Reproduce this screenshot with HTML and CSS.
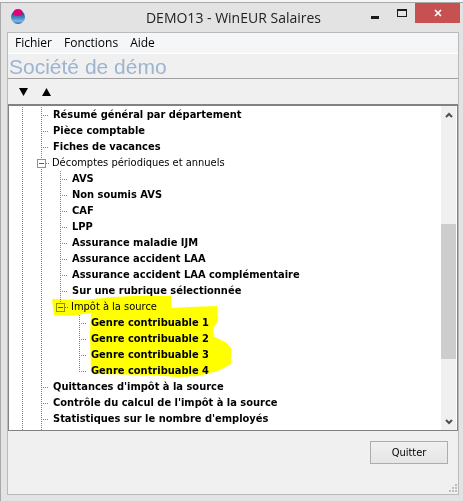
FILE: index.html
```html
<!DOCTYPE html>
<html lang="fr">
<head>
  <meta charset="UTF-8">
  <meta name="viewport" content="width=device-width, initial-scale=1.0">
  <title>DEMO13 - WinEUR Salaires</title>
  <link rel="stylesheet" href="styles.css">
</head>
<body>
  <div class="window">
    <header class="titlebar">
      <svg class="app-icon" width="16" height="16" viewBox="0 0 16 16">
        <defs>
          <linearGradient id="globe" x1="0" y1="0" x2="0" y2="1">
            <stop offset="0.3" stop-color="#2c5f93"/>
            <stop offset="0.6" stop-color="#4f8fcc"/>
            <stop offset="0.8" stop-color="#7db8ee"/>
            <stop offset="1" stop-color="#2c5f93"/>
          </linearGradient>
        </defs>
        <circle cx="8" cy="9" r="7" fill="url(#globe)"/>
        <ellipse cx="8" cy="4.500" rx="4.500" ry="3.500" fill="#e0007a"/>
      </svg>
      <h1 class="title">DEMO13 - WinEUR Salaires</h1>
      <div class="controls">
        <button class="control" type="button" aria-label="Réduire">
          <svg width="10" height="12" viewBox="0 0 10 12"><path d="M1 9h8v3H1z" fill="#1a1a1a"/></svg>
        </button>
        <button class="control" type="button" aria-label="Agrandir">
          <svg width="10" height="10" viewBox="0 0 10 10"><path d="M0 1h10v8H0zM1 3v5h8V3z" fill="#1a1a1a" fill-rule="evenodd"/></svg>
        </button>
        <button class="control close" type="button" aria-label="Fermer">
          <svg width="8" height="8" viewBox="0 0 8 8"><path d="M1 1l6 6M7 1l-6 6" stroke="#fff" stroke-width="1.7"/></svg>
        </button>
      </div>
    </header>

    <div class="client">
      <nav class="menubar">
        <a href="#">Fichier</a>
        <a href="#">Fonctions</a>
        <a href="#">Aide</a>
      </nav>
      <h2 class="company">Société de démo</h2>
      <div class="toolbar">
        <button type="button" aria-label="Tout développer">
          <svg width="9" height="8" viewBox="0 0 9 8"><path d="M0 0h9L4.500 8z"/></svg>
        </button>
        <button type="button" aria-label="Tout réduire">
          <svg width="9" height="8" viewBox="0 0 9 8"><path d="M0 8h9L4.500 0z"/></svg>
        </button>
      </div>

      <div class="panel">
        <div class="tree">
          <ul>
            <li>
              <ul>
                <li><span class="row">Résumé général par département</span></li>
                <li><span class="row">Pièce comptable</span></li>
                <li><span class="row">Fiches de vacances</span></li>
                <li>
                  <span class="row group"><button class="toggle" type="button" aria-label="Réduire Décomptes"></button>Décomptes périodiques et annuels</span>
                  <ul>
                    <li><span class="row">AVS</span></li>
                    <li><span class="row">Non soumis AVS</span></li>
                    <li><span class="row">CAF</span></li>
                    <li><span class="row">LPP</span></li>
                    <li><span class="row">Assurance maladie IJM</span></li>
                    <li><span class="row">Assurance accident LAA</span></li>
                    <li><span class="row">Assurance accident LAA complémentaire</span></li>
                    <li><span class="row">Sur une rubrique sélectionnée</span></li>
                    <li class="last marked">
                      <svg class="marker" width="184" height="84" viewBox="0 0 184 84">
                        <path d="M2 4L34 5L62 2L85 1L121 1L121 13L138 12L167 11L168 26L164 32L163 41L177 48L181 53L181 69L168 76L148 81L128 82L98 80L48 79L41 77L40 40L41 18L20 21L4 20Z"/>
                      </svg>
                      <span class="row group"><button class="toggle" type="button" aria-label="Réduire Impôt à la source"></button>Impôt à la source</span>
                      <ul>
                        <li><span class="row">Genre contribuable 1</span></li>
                        <li><span class="row">Genre contribuable 2</span></li>
                        <li><span class="row">Genre contribuable 3</span></li>
                        <li class="last"><span class="row">Genre contribuable 4</span></li>
                      </ul>
                    </li>
                  </ul>
                </li>
                <li><span class="row">Quittances d'impôt à la source</span></li>
                <li><span class="row">Contrôle du calcul de l'impôt à la source</span></li>
                <li><span class="row">Statistiques sur le nombre d'employés</span></li>
                <li><span class="row">Statistiques sur le montant de base</span></li>
              </ul>
            </li>
          </ul>
        </div>
        <div class="scrollbar">
          <button type="button" aria-label="Défiler vers le haut">
            <svg width="8" height="6" viewBox="0 0 8 6"><path d="M1 5l3-3 3 3" fill="none" stroke="#505050" stroke-width="2"/></svg>
          </button>
          <div class="track"><div class="thumb"></div></div>
          <button type="button" aria-label="Défiler vers le bas">
            <svg width="8" height="6" viewBox="0 0 8 6"><path d="M1 1l3 3 3-3" fill="none" stroke="#505050" stroke-width="2"/></svg>
          </button>
        </div>
      </div>

      <footer class="footer">
        <button class="quit" type="button">Quitter</button>
        <svg class="grip" width="8" height="8" viewBox="0 0 8 8"><path d="M6 0h2v2H6zM3 3h2v2H3zM6 3h2v2H6zM0 6h2v2H0zM3 6h2v2H3zM6 6h2v2H6z" fill="#bdbdbd"/></svg>
      </footer>
    </div>
  </div>
</body>
</html>
```

FILE: styles.css
```css
* {
  box-sizing: border-box;
}
body {
  margin: 0;
  height: 100vh;
  padding-top: 2px;
  background-color: #f4f4f4;
  font-family: "Open Sans", "Noto Sans", sans-serif;
  font-size: 12px;
  color: #000;
}
button {
  padding: 0;
  border: none;
  background: none;
  font: inherit;
  color: inherit;
}
svg {
  display: block;
}
ul {
  list-style: none;
  margin: 0;
  padding: 0;
}
.window {
  display: flex;
  flex-direction: column;
  height: 100%;
  padding: 0 3px 6px 6px;
  border-top: 1px solid #a8a8a8;
  border-left: 1px solid #a8a8a8;
  background-color: #e3e3e3;
}
.titlebar {
  display: flex;
  align-items: flex-start;
  height: 29px;
}
.app-icon {
  margin: 5px 0 0 3px;
}
.title {
  flex: 1;
  margin: 0;
  padding-left: 80px;
  text-align: center;
  font-size: 14px;
  font-weight: normal;
  line-height: 29px;
  color: #222;
  white-space: nowrap;
}
.controls {
  display: flex;
}
.control {
  display: flex;
  align-items: center;
  justify-content: center;
  width: 27px;
  height: 20px;
}
.close {
  width: 45px;
  background-color: #c75050;
}
.client {
  flex: 1;
  display: flex;
  flex-direction: column;
  min-height: 0;
  margin-right: 1px;
  border: 1px solid #bababa;
  background-color: #f0f0f0;
}
.menubar {
  display: flex;
  gap: 12px;
  height: 20px;
  padding-left: 7px;
  background-color: #f5f6f7;
  line-height: 20px;
}
.menubar a {
  color: inherit;
  text-decoration: none;
}
.company {
  margin: 0;
  height: 26px;
  padding-left: 1px;
  border-top: 1px solid #fff;
  border-bottom: 1px solid #a0a0a0;
  font-family: "Liberation Sans", Arial, sans-serif;
  font-size: 21px;
  font-weight: normal;
  line-height: 25px;
  color: #9db4cf;
}
.toolbar {
  display: flex;
  gap: 14px;
  align-items: center;
  height: 25px;
  padding-left: 11px;
}
.panel {
  flex: 1;
  display: flex;
  min-height: 0;
  padding-right: 1px;
  border: 1px solid #828282;
  border-top-width: 2px;
  background-color: #fff;
}
.tree {
  flex: 1;
  overflow: hidden;
  padding: 1px 0 0 13px;
  font-family: "DejaVu Sans Condensed", "DejaVu Sans", sans-serif;
  font-size: 11px;
  font-weight: bold;
}
/* dotted guide lines */
.tree li {
  background: repeating-linear-gradient(#808080 0 1px, transparent 1px 2px) 0 0 / 1px 100% no-repeat;
}
.tree li.last {
  background-size: 1px 8px;
}
.tree li ul {
  margin-left: 19px;
}
.row {
  display: flex;
  align-items: center;
  height: 16px;
  line-height: 16px;
  white-space: nowrap;
}
.row::before {
  content: "";
  width: 8px;
  height: 1px;
  margin-right: 4px;
  background: repeating-linear-gradient(90deg, #808080 0 1px, transparent 1px 2px);
}
.group {
  position: relative;
  margin-left: -4px;
  font-weight: normal;
}
.group::before {
  width: 4px;
  margin-right: 2px;
}
.toggle {
  order: -1;
  width: 9px;
  height: 9px;
  border: 1px solid #919191;
  background: linear-gradient(#4b5a8c, #4b5a8c) center / 5px 1px no-repeat #fff;
}
/* yellow highlighter over the "Impôt à la source" branch */
.marked {
  position: relative;
}
.marker {
  position: absolute;
  top: -4px;
  left: -10px;
  fill: #ff0;
  mix-blend-mode: multiply;
  z-index: 1;
}
.scrollbar {
  display: flex;
  flex-direction: column;
  width: 15px;
  background-color: #f0f0f0;
}
.scrollbar button {
  display: flex;
  align-items: center;
  justify-content: center;
  height: 17px;
}
.track {
  flex: 1;
  display: grid;
  grid-template-rows: 101fr 135fr 54fr;
}
.thumb {
  grid-row: 2;
  background-color: #cdcdcd;
}
.footer {
  display: flex;
  align-items: flex-start;
  justify-content: flex-end;
  height: 63px;
  padding: 10px 1px 2px 0;
}
.quit {
  width: 78px;
  height: 23px;
  border: 1px solid #acacac;
  background: linear-gradient(#f0f0f0, #e5e5e5);
  font-family: "DejaVu Sans Condensed", "DejaVu Sans", sans-serif;
  font-size: 11px;
}
.grip {
  align-self: flex-end;
  margin-left: 1px;
}
```
